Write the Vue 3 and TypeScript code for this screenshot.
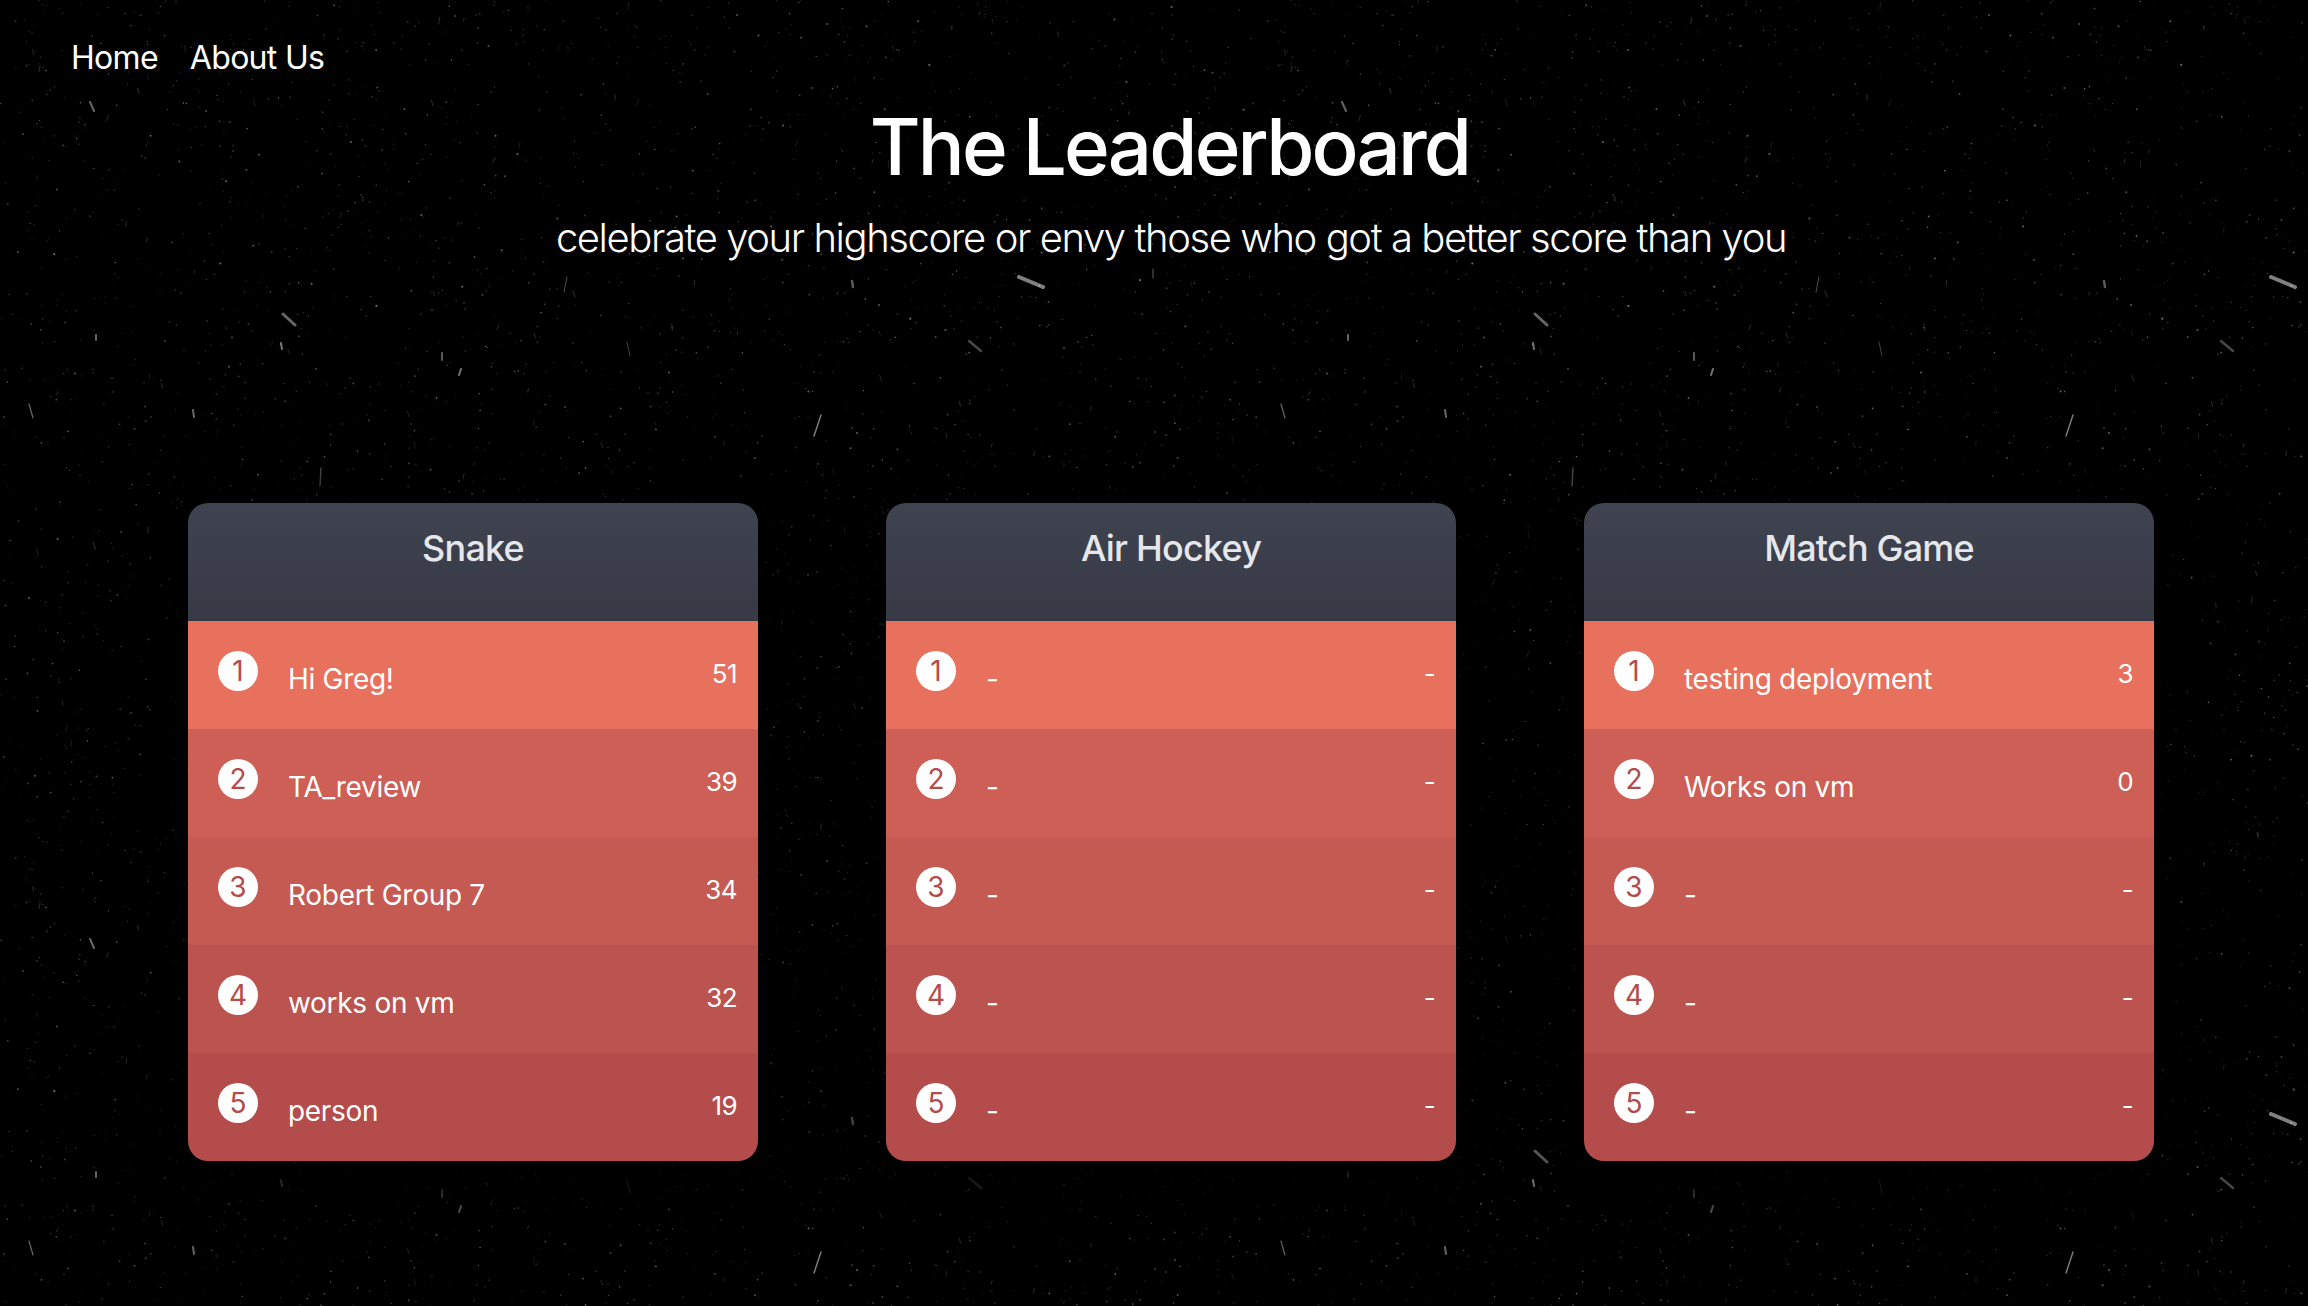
<script setup lang="ts">
interface Row { rank: number; name: string; score: string }
interface Board { title: string; rows: Row[] }

function fill(entries: [string, string][]): Row[] {
  const out: Row[] = []
  for (let i = 0; i < 5; i++) {
    const e = entries[i] ?? ['-', '-']
    out.push({ rank: i + 1, name: e[0], score: e[1] })
  }
  return out
}

const boards: Board[] = [
  { title: 'Snake', rows: fill([['Hi Greg!', '51'], ['TA_review', '39'], ['Robert Group 7', '34'], ['works on vm', '32'], ['person', '19']]) },
  { title: 'Air Hockey', rows: fill([]) },
  { title: 'Match Game', rows: fill([['testing deployment', '3'], ['Works on vm', '0']]) },
]

const TILE_W = 1252
const TILE_H = 837
let seed = 12345
function rnd(): number {
  seed = (seed * 16807) % 2147483647
  return seed / 2147483647
}
const specks = Array.from({ length: 3000 }, () => ({
  x: +(rnd() * TILE_W).toFixed(1),
  y: +(rnd() * TILE_H).toFixed(1),
  r: +(0.45 + rnd() * rnd() * 0.7).toFixed(2),
  o: +(0.12 + rnd() * 0.3).toFixed(2),
}))
const scratches = Array.from({ length: 120 }, () => {
  const x = rnd() * TILE_W
  const y = rnd() * TILE_H
  const a = Math.PI / 2 + (rnd() - 0.5) * 0.8
  const l = 2 + rnd() * 5
  return {
    x1: +x.toFixed(1),
    y1: +y.toFixed(1),
    x2: +(x + Math.cos(a) * l).toFixed(1),
    y2: +(y + Math.sin(a) * l).toFixed(1),
    o: +(0.08 + rnd() * 0.12).toFixed(2),
  }
})
const streaks = [
  { x1: 1019, y1: 277, x2: 1043, y2: 287, w: 4, o: 0.5 },
  { x1: 283, y1: 314, x2: 295, y2: 325, w: 3, o: 0.4 },
  { x1: 969, y1: 341, x2: 981, y2: 351, w: 2.4, o: 0.28 },
  { x1: 90, y1: 102, x2: 94, y2: 111, w: 2, o: 0.4 },
  { x1: 821, y1: 415, x2: 814, y2: 436, w: 1.4, o: 0.5 },
  { x1: 29, y1: 404, x2: 33, y2: 418, w: 1.2, o: 0.4 },
  { x1: 281, y1: 343, x2: 282, y2: 349, w: 2, o: 0.45 },
  { x1: 442, y1: 353, x2: 442, y2: 360, w: 2, o: 0.35 },
  { x1: 461, y1: 369, x2: 459, y2: 375, w: 2, o: 0.45 },
  { x1: 96, y1: 335, x2: 96, y2: 340, w: 2, o: 0.4 },
  { x1: 193, y1: 410, x2: 194, y2: 417, w: 2, o: 0.4 },
  { x1: 852, y1: 281, x2: 853, y2: 287, w: 2.5, o: 0.35 },
  { x1: 321, y1: 468, x2: 320, y2: 486, w: 1.4, o: 0.3 },
  { x1: 567, y1: 277, x2: 564, y2: 292, w: 1, o: 0.3 },
  { x1: 627, y1: 342, x2: 630, y2: 356, w: 1, o: 0.25 },
  { x1: 1153, y1: 269, x2: 1153, y2: 278, w: 1.2, o: 0.3 },
]
</script>

<template>
  <div class="page">
    <svg class="grain" width="100%" height="100%" aria-hidden="true">
      <defs>
        <pattern id="tile" :width="TILE_W" :height="TILE_H" patternUnits="userSpaceOnUse">
          <circle v-for="(s, i) in specks" :key="'s' + i" :cx="s.x" :cy="s.y" :r="s.r" fill="#fff" :opacity="s.o" />
          <line v-for="(s, i) in scratches" :key="'c' + i" :x1="s.x1" :y1="s.y1" :x2="s.x2" :y2="s.y2" stroke="#fff" stroke-width="1" stroke-linecap="round" :opacity="s.o" />
          <line v-for="(s, i) in streaks" :key="'l' + i" :x1="s.x1" :y1="s.y1" :x2="s.x2" :y2="s.y2" stroke="#fff" :stroke-width="s.w" stroke-linecap="round" :opacity="s.o" />
        </pattern>
      </defs>
      <rect width="100%" height="100%" fill="url(#tile)" />
    </svg>

    <div class="content">
      <nav class="nav">
        <a class="link">Home</a>
        <a class="link">About Us</a>
      </nav>
      <header class="hero">
        <h1 class="title">The Leaderboard</h1>
        <p class="subtitle">celebrate your highscore or envy those who got a better score than you</p>
      </header>
      <main class="boards">
        <section v-for="b in boards" :key="b.title" class="card">
          <h2 class="card-title">{{ b.title }}</h2>
          <div v-for="r in b.rows" :key="r.rank" class="row" :class="'row-' + r.rank">
            <span class="rank">{{ r.rank }}</span>
            <span class="name">{{ r.name }}</span>
            <span class="score">{{ r.score }}</span>
          </div>
        </section>
      </main>
    </div>
  </div>
</template>

<style>
html, body { margin: 0; background: #000; overflow: hidden; }
</style>

<style scoped>
.page {
  position: relative;
  width: 2308px;
  height: 1306px;
  overflow: hidden;
  background: #000;
  font-family: Inter, "Liberation Sans", sans-serif;
  color: #fff;
}
.grain {
  position: absolute;
  inset: 0;
  filter: blur(0.5px);
}
.content {
  position: relative;
  width: 2342px;
}
.nav {
  display: flex;
  gap: 32px;
  padding: 38px 71px 0;
  height: 40px;
}
.link {
  font-size: 32px;
  line-height: 40px;
  letter-spacing: -0.7px;
  color: #fff;
}
.hero { text-align: center; }
.title {
  margin: 24px 0 0;
  padding-right: 3px;
  font-size: 78px;
  line-height: 90px;
  font-weight: 500;
  letter-spacing: -2.85px;
}
.subtitle {
  margin: 22px 0 0;
  font-size: 40px;
  line-height: 48px;
  font-weight: 300;
  letter-spacing: -1.42px;
}
.boards {
  display: flex;
  gap: 128px;
  padding: 241px 0 0 188px;
}
.card {
  width: 570px;
  border-radius: 20px;
  overflow: hidden;
  box-shadow: 0 20px 60px 20px rgba(0, 0, 0, 0.9);
}
.card-title {
  margin: 0;
  height: 118px;
  box-sizing: border-box;
  padding-top: 23px;
  text-align: center;
  font-size: 36px;
  line-height: 44px;
  font-weight: 500;
  letter-spacing: -0.8px;
  color: #e5e7eb;
  background: linear-gradient(#3f4350, #373a45);
}
.row {
  position: relative;
  display: flex;
  height: 108px;
  box-sizing: border-box;
  padding: 30px 21px 0 30px;
}
.row-1 { background: #e8715e; }
.row-2 { background: #ce5f56; }
.row-3 { background: #c55a53; }
.row-4 { background: #bb534f; }
.row-5 { background: #b34c4b; }
.rank {
  flex: none;
  width: 40px;
  height: 40px;
  border-radius: 50%;
  background: #fff;
  color: #b34c4b;
  font-size: 28px;
  line-height: 40px;
  text-align: center;
}
.name {
  flex: 1;
  margin-left: 30px;
  padding-top: 10px;
  font-size: 28px;
  line-height: 36px;
  letter-spacing: -0.3px;
}
.score {
  padding-top: 7px;
  font-size: 26px;
  line-height: 32px;
  letter-spacing: -0.6px;
}
</style>
